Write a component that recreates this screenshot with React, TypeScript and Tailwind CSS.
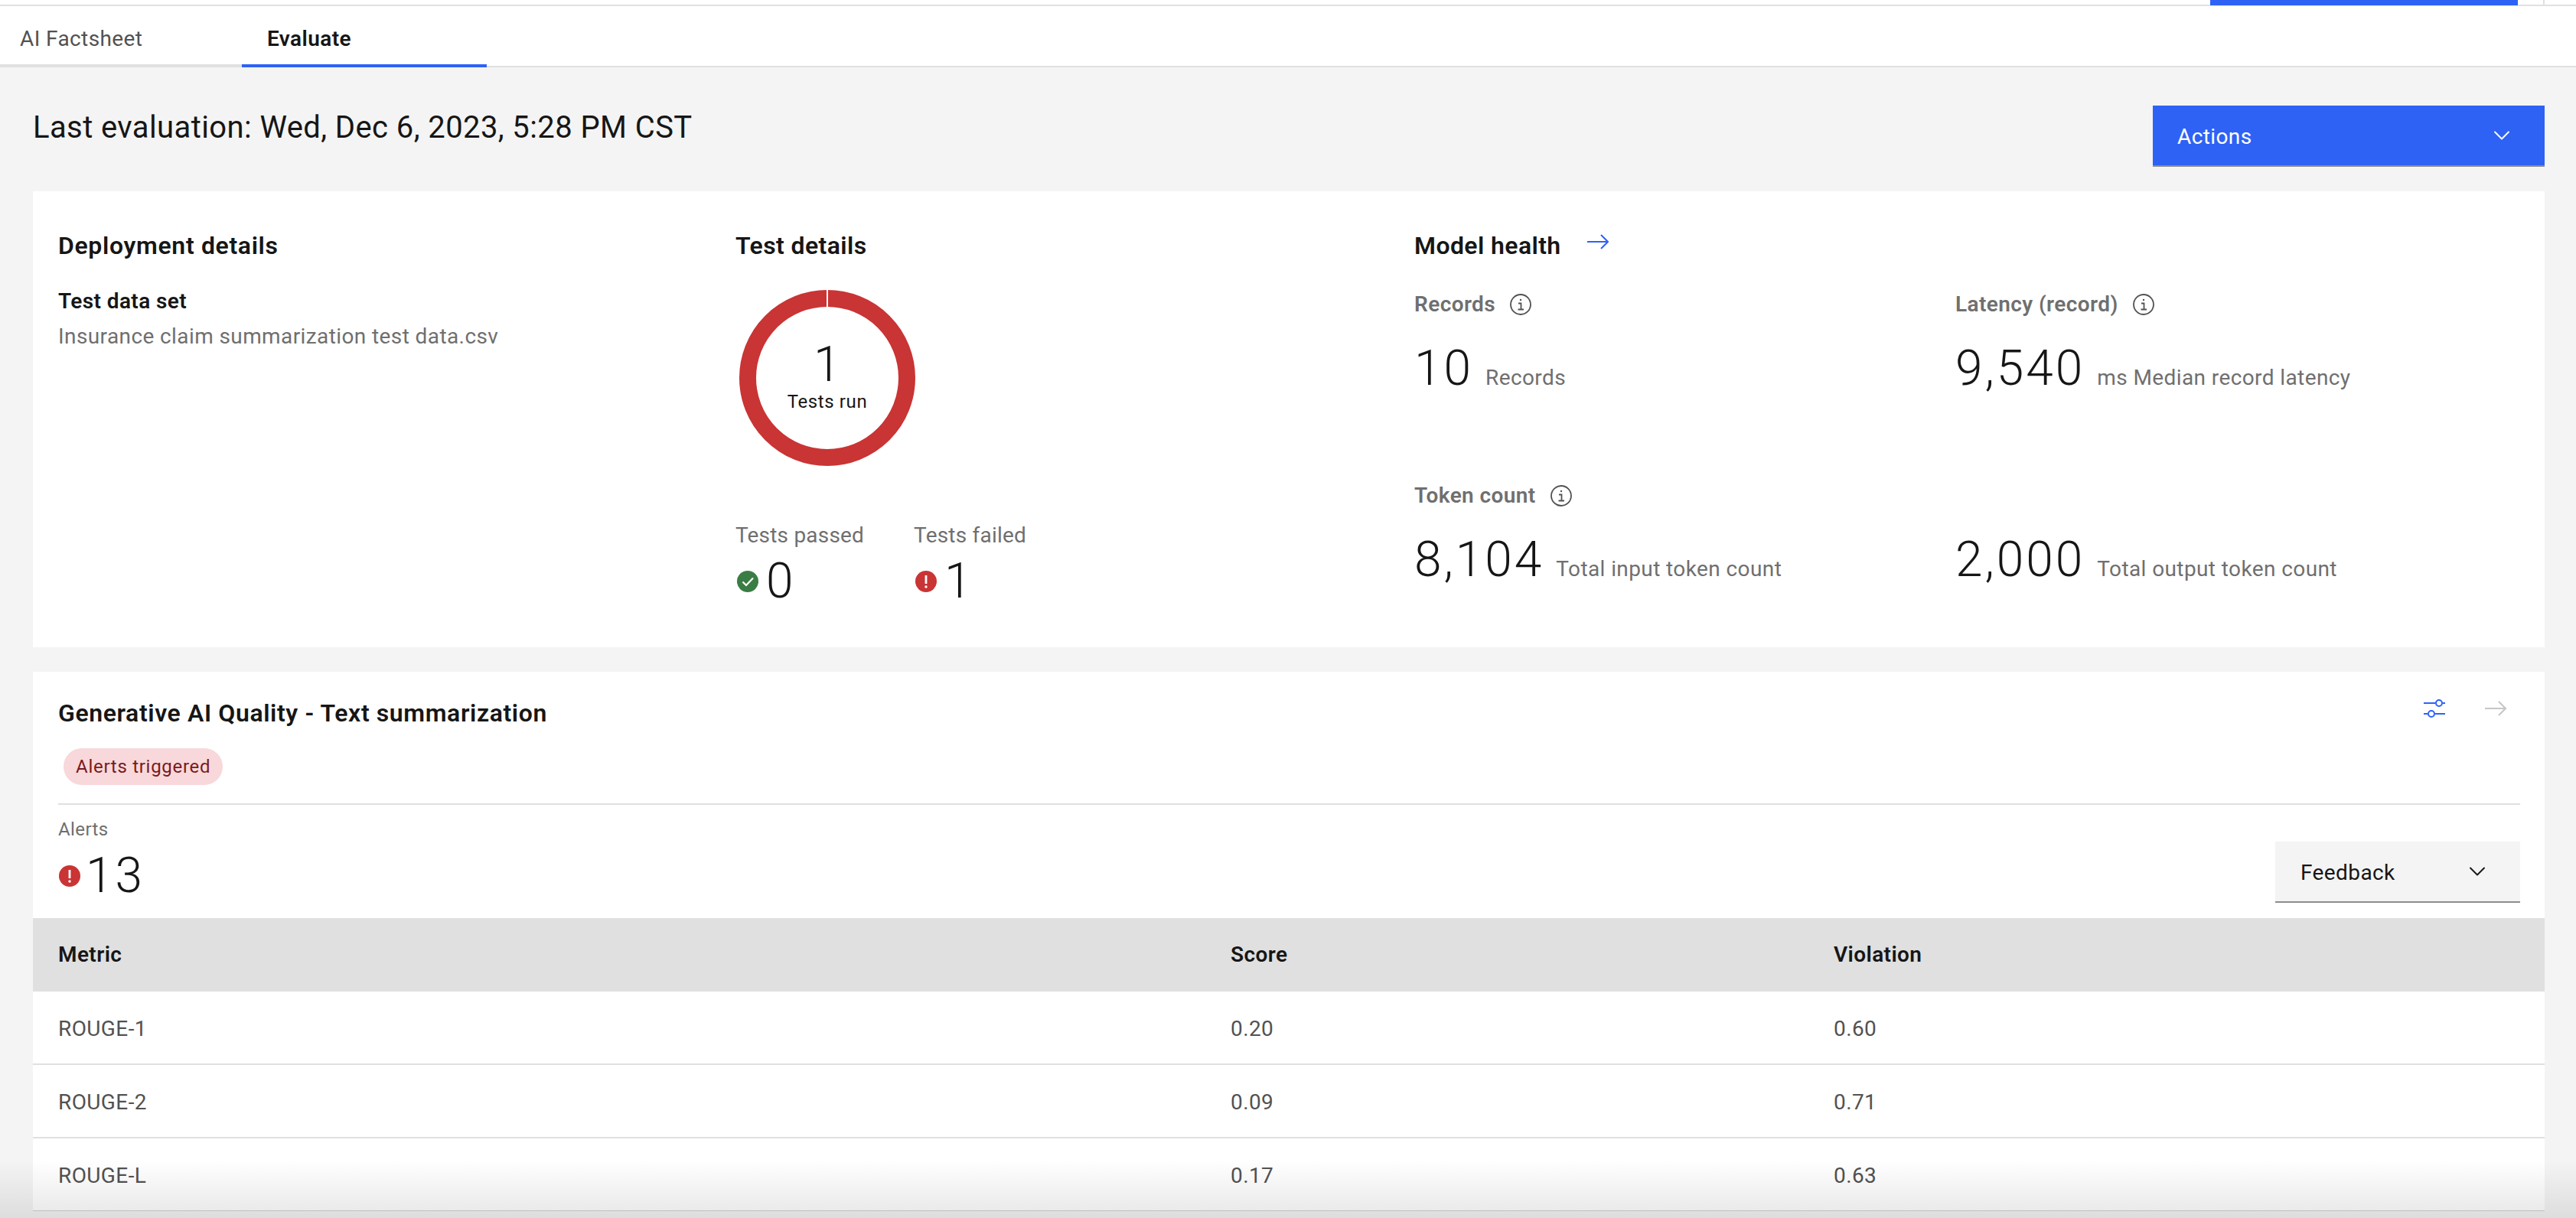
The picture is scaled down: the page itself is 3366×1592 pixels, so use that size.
import { ChevronDown } from "lucide-react";

function ArrowIcon({ className }: { className: string }) {
  return (
    <svg viewBox="0 0 28 20" fill="none" stroke="currentColor" strokeWidth="2" className={className}>
      <path d="M0 10h26M18 1l9 9-9 9" />
    </svg>
  );
}

function InfoIcon() {
  return (
    <svg viewBox="0 0 28 28" fill="none" stroke="#525252" strokeWidth="1.8" className="h-[28px] w-[28px] shrink-0">
      <circle cx="14" cy="14" r="13" />
      <path d="M11 12.5h3.5v8M10.5 20.5h7.5" />
      <circle cx="14" cy="8" r="1.2" fill="#525252" stroke="none" />
    </svg>
  );
}

function SlidersIcon() {
  return (
    <svg viewBox="0 0 28 24" fill="none" stroke="currentColor" strokeWidth="2" className="h-[24px] w-[28px] text-[#2e62f5]">
      <path d="M0 5h15M25 5h3M0 19h5M15 19h13" />
      <circle cx="20" cy="5" r="4" />
      <circle cx="10" cy="19" r="4" />
    </svg>
  );
}

function ErrorDot() {
  return (
    <svg viewBox="0 0 28 28" className="h-[28px] w-[28px] shrink-0">
      <circle cx="14" cy="14" r="14" fill="#c93434" />
      <path d="M12.6 6h2.8v11h-2.8z" fill="#fff" />
      <circle cx="14" cy="21" r="1.7" fill="#fff" />
    </svg>
  );
}

function SuccessDot() {
  return (
    <svg viewBox="0 0 28 28" className="h-[28px] w-[28px] shrink-0">
      <circle cx="14" cy="14" r="14" fill="#3a7d44" />
      <path d="M7.5 14.5l4.5 4.5 9-9.5" fill="none" stroke="#fff" strokeWidth="2.2" />
    </svg>
  );
}

function Ring() {
  return (
    <div className="relative ml-[5px] h-[230px] w-[230px]">
      <svg viewBox="0 0 230 230" className="h-full w-full">
        <circle cx="115" cy="115" r="104" fill="none" stroke="#c93434" strokeWidth="22" />
        <rect x="114" y="0" width="2" height="24" fill="#fff" />
      </svg>
      <div className="absolute inset-0 flex flex-col items-center pt-[66px]">
        <span className="text-[64px] leading-[64px] font-light">1</span>
        <span className="text-[24px] leading-[32px] tracking-[0.6px]">Tests run</span>
      </div>
    </div>
  );
}

function Stat({ label, info, value, note }: { label?: string; info?: boolean; value: string; note: string }) {
  return (
    <div className="h-[250px]">
      <div className="flex h-[36px] items-center gap-[19px] text-[28px] leading-[36px] font-semibold text-[#6f6f6f]">
        {label && <span>{label}</span>}
        {info && <InfoIcon />}
      </div>
      <div className="mt-[28px] flex items-baseline gap-[16px]">
        <span className="text-[64px] leading-[76px] font-light tracking-[3px]">{value}</span>
        <span className="text-[28px] leading-[36px] text-[#6f6f6f]">{note}</span>
      </div>
    </div>
  );
}

function TestCount({ label, value, icon }: { label: string; value: string; icon: React.ReactNode }) {
  return (
    <div>
      <div className="text-[28px] leading-[36px] tracking-[0.2px] text-[#6f6f6f]">{label}</div>
      <div className="mt-[4px] flex items-center gap-[10px] pl-[2px]">
        {icon}
        <span className="text-[64px] leading-[76px] font-light">{value}</span>
      </div>
    </div>
  );
}

const rows = [
  { metric: "ROUGE-1", score: "0.20", violation: "0.60" },
  { metric: "ROUGE-2", score: "0.09", violation: "0.71" },
  { metric: "ROUGE-L", score: "0.17", violation: "0.63" },
];

export default function App() {
  return (
    <div className="relative h-[1592px] overflow-hidden bg-[#f4f4f4] tracking-[0.4px] text-[#161616] [font-family:Roboto,sans-serif]">
      {/* top strip */}
      <div className="h-[8px] border-b-2 border-[#e0e0e0] bg-white">
        <div className="ml-[2888px] flex">
          <div className="h-[7px] w-[402px] bg-[#2e62f5]" />
          <div className="ml-[33px] h-[6px] w-[2px] bg-[#e0e0e0]" />
        </div>
      </div>

      {/* tabs */}
      <div className="flex h-[80px] bg-white text-[28px] leading-[36px]">
        <div className="w-[316px] border-b-4 border-[#e0e0e0] pt-[25px] pl-[26px] text-[#525252]">AI Factsheet</div>
        <div className="w-[320px] border-b-4 border-[#2e62f5] pt-[25px] pl-[33px] font-semibold">Evaluate</div>
        <div className="flex-1 border-b-2 border-[#e0e0e0]" />
      </div>

      <div className="pr-[41px] pl-[43px]">
        <div className="flex items-start justify-between pt-[50px] pb-[32px]">
          <h1 className="mt-[5px] text-[40px] leading-[48px] font-normal">Last evaluation: Wed, Dec 6, 2023, 5:28 PM CST</h1>
          <button className="flex h-[80px] w-[512px] items-center justify-between border-b-2 border-[#8d8d8d] bg-[#2e62f5] pr-[38px] pl-[32px] text-[28px] text-white">
            <span className="mt-[4px]">Actions</span>
            <ChevronDown size={36} strokeWidth={1.3} />
          </button>
        </div>

        {/* summary panel */}
        <section className="grid h-[596px] grid-cols-[885px_887px_1fr] bg-white pt-[51px] pl-[33px]">
          <div>
            <h2 className="text-[32px] leading-[40px] font-semibold tracking-[0.65px]">Deployment details</h2>
            <h3 className="mt-[35px] text-[28px] leading-[36px] font-semibold">Test data set</h3>
            <p className="mt-[10px] text-[28px] leading-[36px] text-[#6f6f6f]">Insurance claim summarization test data.csv</p>
          </div>
          <div>
            <h2 className="text-[32px] leading-[40px] font-semibold">Test details</h2>
            <div className="mt-[38px]">
              <Ring />
            </div>
            <div className="mt-[73px] flex gap-[65px]">
              <TestCount label="Tests passed" value="0" icon={<SuccessDot />} />
              <TestCount label="Tests failed" value="1" icon={<ErrorDot />} />
            </div>
          </div>
          <div>
            <div className="flex items-center gap-[34px]">
              <h2 className="text-[32px] leading-[40px] font-semibold">Model health</h2>
              <ArrowIcon className="mb-[10px] h-[20px] w-[28px] text-[#2e62f5]" />
            </div>
            <div className="mt-[39px] grid grid-cols-[707px_1fr]">
              <Stat label="Records" info value="10" note="Records" />
              <Stat label="Latency (record)" info value="9,540" note="ms Median record latency" />
              <Stat label="Token count" info value="8,104" note="Total input token count" />
              <Stat value="2,000" note="Total output token count" />
            </div>
          </div>
        </section>

        {/* quality panel */}
        <section className="mt-[32px] border-b border-[#d0d0d0] bg-white">
          <div className="pr-[32px] pl-[33px]">
            <div className="flex items-start justify-between pt-[34px]">
              <h2 className="text-[32px] leading-[40px] font-semibold tracking-[0.6px]">Generative AI Quality - Text summarization</h2>
              <div className="mt-[2px] flex items-center gap-[52px] pr-[18px]">
                <SlidersIcon />
                <ArrowIcon className="h-[20px] w-[28px] text-[#c6c6c6]" />
              </div>
            </div>
            <span className="mt-[26px] ml-[7px] inline-flex h-[48px] items-center rounded-full bg-[#f8d8da] px-[16px] text-[24px] tracking-[0.72px] text-[#7a1a20]">
              Alerts triggered
            </span>
            <div className="mt-[24px] flex justify-between border-t-2 border-[#e0e0e0] pt-[16px] pb-[20px]">
              <div>
                <div className="text-[24px] leading-[32px] text-[#6f6f6f]">Alerts</div>
                <div className="mt-[10px] flex items-center gap-[7px] pl-[1px]">
                  <ErrorDot />
                  <span className="text-[64px] leading-[70px] font-light tracking-[3px]">13</span>
                </div>
              </div>
              <button className="mt-[32px] flex h-[80px] w-[320px] items-center justify-between border-b-2 border-[#8d8d8d] bg-[#f4f4f4] pr-[38px] pl-[33px] text-[28px]">
                <span className="mt-[4px]">Feedback</span>
                <ChevronDown size={36} strokeWidth={1.3} />
              </button>
            </div>
          </div>

          <div className="grid h-[96px] grid-cols-[1532px_788px_1fr] items-center bg-[#e0e0e0] pl-[33px] text-[28px] font-semibold">
            <span>Metric</span>
            <span>Score</span>
            <span>Violation</span>
          </div>
          {rows.map((row) => (
            <div
              key={row.metric}
              className="grid h-[96px] grid-cols-[1532px_788px_1fr] items-center border-b-2 border-[#e0e0e0] pt-[4px] pl-[33px] text-[28px] text-[#525252] last:h-[94px] last:border-b-0"
            >
              <span>{row.metric}</span>
              <span>{row.score}</span>
              <span>{row.violation}</span>
            </div>
          ))}
        </section>
      </div>

      {/* fade at the bottom of the scroll area */}
      <div className="pointer-events-none absolute inset-x-0 bottom-0 h-[76px] bg-gradient-to-b from-transparent to-[#00000018]" />
    </div>
  );
}
